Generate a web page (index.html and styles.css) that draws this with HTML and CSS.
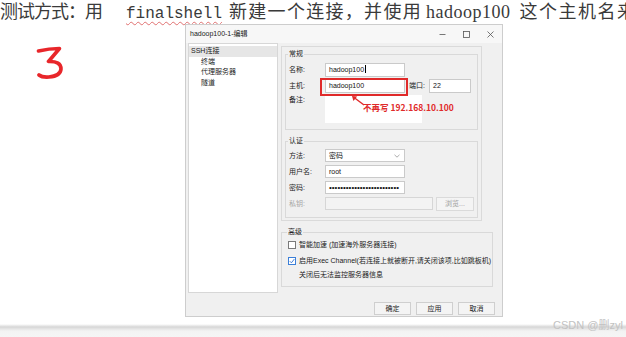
FILE: index.html
```html
<!DOCTYPE html>
<html lang="zh-CN">

<head>
    <meta charset="UTF-8">
    <meta name="viewport" content="width=device-width, initial-scale=1.0">
    <title>测试方式</title>
    <link rel="stylesheet" href="styles.css">
</head>

<body>
    <div class="page">
        <p class="doc-line"><span class="seg-a">测试方式：用</span><span class="code">finalshell</span><span class="seg-b">新建一个连接，并使用</span><span class="host">hadoop100</span><span class="seg-c">这个主机名来测试连接</span></p>

        <div class="stage">
            <div class="step">
                <svg width="28" height="34" viewBox="0 0 28 34">
                    <path d="M2.5 6 Q13 3.5 23.5 3.5 L12.5 16.5 Q25 16 25 24 Q24.5 31 13 32 Q6 32.5 3 30" fill="none" stroke="#e8262a" stroke-width="3.6" stroke-linecap="round" stroke-linejoin="round"/>
                </svg>
            </div>

            <div class="dialog">
                <div class="titlebar">
                    <span class="title">hadoop100-1-编辑</span>
                    <div class="win-ctrls">
                        <span class="win-btn">
                            <svg width="7" height="7" viewBox="0 0 7 7"><path d="M0.5 3.5 H6.5" stroke="#555" stroke-width="0.8"/></svg>
                        </span>
                        <span class="win-btn">
                            <svg width="7" height="7" viewBox="0 0 7 7"><rect x="0.5" y="0.5" width="6" height="6" fill="none" stroke="#555" stroke-width="0.8"/></svg>
                        </span>
                        <span class="win-btn">
                            <svg width="7" height="7" viewBox="0 0 7 7"><path d="M0.5 0.5 L6.5 6.5 M6.5 0.5 L0.5 6.5" stroke="#555" stroke-width="0.8"/></svg>
                        </span>
                    </div>
                </div>

                <div class="dialog-body">
                    <ul class="tree">
                        <li class="tree-item selected">SSH连接</li>
                        <li class="tree-item child">终端</li>
                        <li class="tree-item child">代理服务器</li>
                        <li class="tree-item child">隧道</li>
                    </ul>

                    <div class="settings">
                        <div class="scroll-panel">
                            <fieldset class="group general">
                                <legend>常规</legend>
                                <div class="row">
                                    <span class="lbl">名称:</span>
                                    <div class="field">hadoop100<span class="caret"></span></div>
                                </div>
                                <div class="row">
                                    <span class="lbl">主机:</span>
                                    <div class="field">hadoop100</div>
                                    <span class="lbl port-lbl">端口:</span>
                                    <div class="field port">22</div>
                                </div>
                                <div class="row note-row">
                                    <span class="lbl">备注:</span>
                                    <div class="note"></div>
                                </div>
                            </fieldset>

                            <fieldset class="group auth">
                                <legend>认证</legend>
                                <div class="row">
                                    <span class="lbl">方法:</span>
                                    <div class="field select">密码
                                        <svg class="chevron" width="6" height="4" viewBox="0 0 6 4"><path d="M0.5 0.8 L3 3.2 L5.5 0.8" fill="none" stroke="#888" stroke-width="0.7"/></svg>
                                    </div>
                                </div>
                                <div class="row">
                                    <span class="lbl">用户名:</span>
                                    <div class="field">root</div>
                                </div>
                                <div class="row">
                                    <span class="lbl">密码:</span>
                                    <div class="field dots">•••••••••••••••••••••••••</div>
                                </div>
                                <div class="row disabled">
                                    <span class="lbl">私钥:</span>
                                    <div class="field key"></div>
                                    <span class="btn browse">浏览...</span>
                                </div>
                            </fieldset>
                        </div>

                        <fieldset class="group advanced">
                            <legend>高级</legend>
                            <div class="check-row">
                                <span class="box"></span>
                                <span>智能加速 (加速海外服务器连接)</span>
                            </div>
                            <div class="check-row">
                                <span class="box checked">
                                    <svg width="6" height="6" viewBox="0 0 6 6"><path d="M0.8 3.2 L2.4 4.8 L5.3 1.1" fill="none" stroke="#2b6fd1" stroke-width="0.9"/></svg>
                                </span>
                                <span>启用Exec Channel(若连接上就被断开,请关闭该项,比如跳板机)</span>
                            </div>
                            <div class="check-row hint">关闭后无法监控服务器信息</div>
                        </fieldset>
                    </div>
                </div>

                <div class="dialog-footer">
                    <span class="btn">确定</span>
                    <span class="btn">应用</span>
                    <span class="btn">取消</span>
                </div>

                <!-- annotation drawn over the dialog -->
                <div class="mark-box"></div>
                <svg class="mark-arrow" width="30" height="22" viewBox="0 0 30 22">
                    <path d="M24 15 L14 7.5" stroke="#e02a2a" stroke-width="1.4"/>
                    <polygon points="12,6 13.4,11 17.2,6.4" fill="#e02a2a"/>
                </svg>
                <span class="mark-text">不再写 192.168.10.100</span>
            </div>
        </div>

        <div class="page-edge"></div>
        <span class="watermark">CSDN @删zyl</span>
    </div>
</body>

</html>
```

FILE: styles.css
```css
* {
    box-sizing: border-box;
}

body {
    margin: 0;
    background: #fff;
    font-family: "Noto Sans CJK SC", sans-serif;
    color: #333;
}

.page {
    position: relative;
    width: 626px;
    height: 337px;
    overflow: hidden;
}

/* document text line */
.doc-line {
    margin: 0;
    height: 20px;
    font-size: 18px;
    line-height: 20px;
    white-space: nowrap;
    color: #3a3a3a;
}

.seg-a {
    letter-spacing: -1px;
}

.code {
    font-family: "Liberation Mono", monospace;
    font-size: 16px;
    margin: 0 7px 0 24px;
    text-decoration: underline wavy #e07070 1px;
    text-underline-offset: 3px;
}

.seg-b {
    letter-spacing: 1.3px;
}

.host {
    font-family: "Liberation Serif", serif;
    letter-spacing: 0.5px;
    margin: 0 9px 0 4px;
}

.seg-c {
    letter-spacing: 1.5px;
}

.stage {
    display: flex;
    margin-top: 4px;
}

.step {
    width: 185px;
    padding: 21px 0 0 36px;
}

/* dialog window */
.dialog {
    position: relative;
    width: 318px;
    height: 293px;
    background: #f0f0f0;
    border: 1px solid #cdcdcd;
    font-family: "Liberation Sans", "Noto Sans CJK SC", sans-serif;
    font-size: 7px;
    line-height: 10px;
    color: #222;
    display: flex;
    flex-direction: column;
}

.titlebar {
    display: flex;
    align-items: center;
    height: 18px;
    padding-left: 4px;
    background: #f7f7f7;
}

.win-ctrls {
    display: flex;
    margin-left: auto;
}

.win-btn {
    display: flex;
    align-items: center;
    justify-content: center;
    width: 24px;
    height: 18px;
}

.dialog-body {
    display: flex;
    height: 250px;
    padding-left: 2px;
}

.tree {
    list-style: none;
    margin: 0;
    padding: 2px 0 0;
    width: 90px;
    height: 250px;
    background: #fff;
    border: 1px solid #d7d7d7;
}

.tree-item {
    line-height: 10.5px;
    padding-left: 2px;
}

.tree-item.selected {
    background: #e6e6e6;
}

.tree-item.child {
    padding-left: 12px;
}

.settings {
    display: flex;
    flex-direction: column;
    margin-left: 3px;
}

.scroll-panel {
    width: 201px;
    height: 175px;
    margin-top: 3px;
    padding: 2px 0 0 3px;
    border: 1px solid #dadada;
}

.group {
    margin: 0;
    min-width: 0;
    border: 1px solid #d9d9d9;
}

.group legend {
    padding: 0 1px;
    margin-left: -1px;
    line-height: 10px;
}

.general {
    width: 193px;
    padding: 4px 3px 6px 3px;
}

.auth {
    width: 193px;
    margin-top: 6px;
    padding: 3px 3px 7px 3px;
}

.row {
    display: flex;
    align-items: center;
    height: 14px;
}

.row + .row {
    margin-top: 2px;
}

.auth .row {
    height: 13px;
}

.auth .row + .row {
    margin-top: 3px;
}

.lbl {
    width: 36px;
    flex-shrink: 0;
}

.field {
    position: relative;
    width: 80px;
    height: 100%;
    padding-left: 3px;
    background: #fff;
    border: 1px solid #cacaca;
    line-height: 11px;
    color: #111;
    white-space: nowrap;
    overflow: hidden;
}

.caret {
    display: inline-block;
    width: 1px;
    height: 8px;
    margin-left: 0.5px;
    background: #000;
    vertical-align: -1px;
}

.port-lbl {
    width: 20px;
    margin-left: 4px;
}

.field.port {
    width: 42px;
}

.note-row {
    align-items: flex-start;
    height: 28px;
}

.note {
    width: 97px;
    height: 28px;
    background: #fff;
}

.chevron {
    position: absolute;
    right: 4px;
    top: 4px;
}

.dots {
    font-family: "Liberation Sans", sans-serif;
    font-size: 8px;
    letter-spacing: 0;
    line-height: 11px;
}

.disabled .lbl {
    color: #a8a8a8;
}

.field.key {
    width: 108px;
    background: #f3f3f3;
    border-color: #d6d6d6;
}

.btn {
    display: flex;
    align-items: center;
    justify-content: center;
    width: 37px;
    height: 13px;
    background: #f4f4f4;
    border: 1px solid #cfcfcf;
    color: #222;
}

.browse {
    margin-left: 3px;
    width: 38px;
    height: 14px;
    color: #a0a0a0;
    border-color: #dadada;
}

.advanced {
    width: 212px;
    margin-top: 6px;
    padding: 1px 3px 4px 6px;
}

.check-row {
    display: flex;
    align-items: center;
    height: 14px;
    white-space: nowrap;
}

.check-row + .check-row {
    margin-top: 2px;
}

.check-row.hint {
    margin-top: 0;
    padding-left: 11px;
}

.box {
    display: flex;
    align-items: center;
    justify-content: center;
    width: 8px;
    height: 8px;
    margin-right: 3px;
    background: #fff;
    border: 1px solid #7a7a7a;
}

.box.checked {
    border-color: #3b7fd8;
}

.dialog-footer {
    display: flex;
    justify-content: flex-end;
    gap: 5px;
    padding: 9px 7px 0 0;
}

/* red annotation */
.mark-box {
    position: absolute;
    left: 134px;
    top: 53px;
    width: 88px;
    height: 18px;
    border: 2px solid #e02a2a;
}

.mark-arrow {
    position: absolute;
    left: 154px;
    top: 65px;
}

.mark-text {
    position: absolute;
    left: 177px;
    top: 77px;
    font-family: "Noto Sans CJK SC", sans-serif;
    font-size: 8.5px;
    line-height: 10px;
    font-weight: bold;
    color: #e02a2a;
    white-space: nowrap;
}

/* page bottom */
.page-edge {
    height: 13px;
    margin-top: 7px;
    background: linear-gradient(to bottom, #fff 0, #d6d6d6 3px, #e6e6e6 5px, #f3f3f3 7px, #f5f5f5 100%);
}

.watermark {
    position: absolute;
    left: 553px;
    top: 318px;
    font-family: "Liberation Sans", "Noto Sans CJK SC", sans-serif;
    font-size: 11px;
    line-height: 14px;
    color: #c2c2c2;
}
```
